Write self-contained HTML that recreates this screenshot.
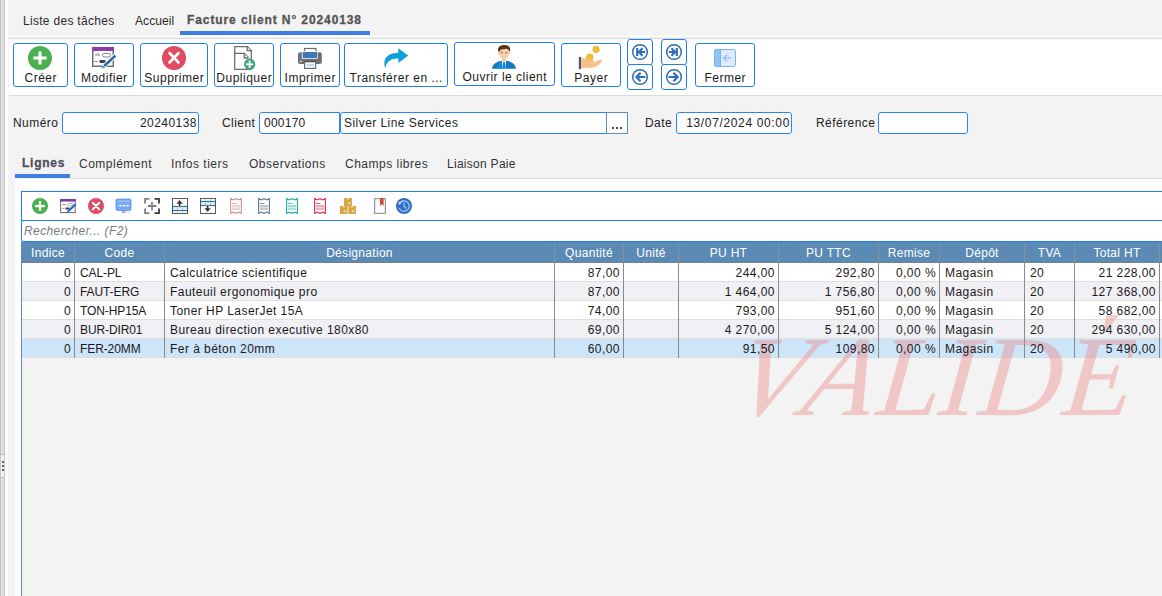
<!DOCTYPE html>
<html><head><meta charset="utf-8">
<style>
*{margin:0;padding:0;box-sizing:border-box}
html,body{width:1162px;height:596px;overflow:hidden;background:#f3f3f3;font-family:"Liberation Sans",sans-serif;font-size:12px;color:#222}
.a{position:absolute}
.t{position:absolute;white-space:nowrap;line-height:14px;font-size:12px;letter-spacing:0.45px}
.btn{position:absolute;top:43px;height:44px;border:1px solid #1f7ff0;border-radius:3px;background:#fff}
.btn .lb{position:absolute;left:0;right:0;top:27px;text-align:center;line-height:14px;white-space:nowrap;color:#1a1a1a;letter-spacing:0.5px;text-indent:0.5px}
.nav{position:absolute;width:26px;height:26px;border:1px solid #1f7ff0;border-radius:3px;background:#fff}
.inp{position:absolute;top:112px;height:22px;border:1px solid #2b87f0;border-radius:3px;background:#fff}
.inp span{position:absolute;top:3px;line-height:14px;white-space:nowrap;letter-spacing:0.45px}
.hd{position:absolute;top:246px;line-height:14px;text-align:center;color:#fff;white-space:nowrap;letter-spacing:0.3px}
.cr{position:absolute;z-index:3;line-height:14px;text-align:right;padding-right:3px;white-space:nowrap;color:#1a1a1a;letter-spacing:0.45px}
.cl{position:absolute;z-index:3;line-height:14px;text-align:left;padding-left:5px;white-space:nowrap;color:#1a1a1a;letter-spacing:0.45px}
.tab{position:absolute;top:157px;line-height:14px;white-space:nowrap;color:#333;letter-spacing:0.5px}
</style></head><body>
<!-- left edge -->
<div class="a" style="left:0;top:0;width:1px;height:596px;background:#c4c4c4"></div>
<div class="a" style="left:1px;top:0;width:3px;height:596px;background:#e0e0e0"></div>
<div class="a" style="left:4px;top:0;width:1px;height:596px;background:#c8c8c8"></div>
<div class="a" style="left:5px;top:0;width:3px;height:596px;background:#fbfbfb"></div>
<div class="a" style="left:1px;top:454px;width:3px;height:24px;background:#f2f2f2;border-top:1px solid #b4b4b4;border-bottom:1px solid #b4b4b4"></div>
<div class="a" style="left:2px;top:461px;width:2px;height:2px;background:#606060"></div>
<div class="a" style="left:2px;top:465px;width:2px;height:2px;background:#606060"></div>
<div class="a" style="left:2px;top:469px;width:2px;height:2px;background:#606060"></div>

<!-- top tabs -->
<div class="t" style="left:23px;top:14px;color:#2a2a2a;letter-spacing:0.3px">Liste des tâches</div>
<div class="t" style="left:135px;top:14px;color:#2a2a2a;letter-spacing:0.1px">Accueil</div>
<div class="t" style="left:187px;top:13px;font-weight:bold;color:#555;letter-spacing:0.9px;-webkit-text-stroke:0.3px #555">Facture client N° 20240138</div>
<div class="a" style="left:180px;top:31px;width:190px;height:4px;background:#3e7fe6"></div>

<!-- toolbar panel -->
<div class="a" style="left:9px;top:35px;width:1153px;height:2px;background:#f9f9f9"></div>
<div class="a" style="left:9px;top:38px;width:1153px;height:1px;background:#d9dbde"></div>
<div class="a" style="left:9px;top:39px;width:1153px;height:56px;background:#fff"></div>
<div class="a" style="left:9px;top:95px;width:1153px;height:1px;background:#d9dbde"></div>

<div class="btn" style="left:13px;width:55px"><div class="lb">Créer</div></div>
<div class="btn" style="left:74px;width:60px"><div class="lb">Modifier</div></div>
<div class="btn" style="left:140px;width:68px"><div class="lb">Supprimer</div></div>
<div class="btn" style="left:214px;width:60px"><div class="lb">Dupliquer</div></div>
<div class="btn" style="left:280px;width:60px"><div class="lb">Imprimer</div></div>
<div class="btn" style="left:344px;width:104px"><div class="lb">Transférer en ...</div></div>
<div class="btn" style="left:454px;top:42px;width:101px"><div class="lb">Ouvrir le client</div></div>
<div class="btn" style="left:561px;width:60px"><div class="lb">Payer</div></div>
<div class="nav" style="left:627px;top:39px"></div>
<div class="nav" style="left:627px;top:64px"></div>
<div class="nav" style="left:661px;top:39px"></div>
<div class="nav" style="left:661px;top:64px"></div>
<div class="btn" style="left:695px;width:60px"><div class="lb">Fermer</div></div>

<!-- form row -->
<div class="t" style="left:13px;top:116px">Numéro</div>
<div class="inp" style="left:62px;width:137px"><span style="right:1px">20240138</span></div>
<div class="t" style="left:222px;top:116px">Client</div>
<div class="inp" style="left:259px;width:81px;border-radius:3px 0 0 3px"><span style="left:4px;letter-spacing:0.25px">000170</span></div>
<div class="inp" style="left:340px;width:267px;border-radius:3px 0 0 3px"><span style="left:3px">Silver Line Services</span></div>
<div class="a" style="left:606px;top:112px;width:22px;height:22px;border:1px solid #5a8dc2;background:#fff"><span class="a" style="left:5px;top:14px;width:2px;height:2px;background:#4a4a4a"></span><span class="a" style="left:9px;top:14px;width:2px;height:2px;background:#4a4a4a"></span><span class="a" style="left:13px;top:14px;width:2px;height:2px;background:#4a4a4a"></span></div>
<div class="t" style="left:645px;top:116px">Date</div>
<div class="inp" style="left:676px;width:116px"><span style="right:1px;letter-spacing:0.65px">13/07/2024 00:00</span></div>
<div class="t" style="left:816px;top:116px">Référence</div>
<div class="inp" style="left:878px;width:90px"></div>

<!-- tabs -->
<div class="tab" style="left:22px;top:156px;font-weight:bold;color:#4f5060;letter-spacing:0.75px;-webkit-text-stroke:0.3px #4f5060">Lignes</div>
<div class="tab" style="left:79px">Complément</div>
<div class="tab" style="left:171px">Infos tiers</div>
<div class="tab" style="left:249px">Observations</div>
<div class="tab" style="left:345px">Champs libres</div>
<div class="tab" style="left:447px;letter-spacing:0.28px">Liaison Paie</div>
<div class="a" style="left:15px;top:174px;width:55px;height:4px;background:#3e7fe6"></div>
<div class="a" style="left:70px;top:178px;width:1092px;height:1px;background:#dcdcdc"></div>
<div class="a" style="left:15px;top:179px;width:1147px;height:417px;background:#fff"></div>

<!-- grid -->
<div id="grid" class="a" style="left:21px;top:241px;width:1141px;height:355px;background:#f3f3f3;border-left:1px solid #5b8cc0"></div>
<div class="a" style="left:21px;top:191px;width:1145px;height:30px;background:#fff;border:1px solid #1f7ff0;border-radius:0"></div>
<div class="a" style="left:21px;top:220px;width:1145px;height:22px;background:#fff;border:1px solid #1f7ff0;border-radius:3px 0 0 3px"></div>
<div class="a" style="left:24px;top:224px;line-height:14px;font-style:italic;color:#7a7a7a;letter-spacing:0.4px">Rechercher... (F2)</div>
<!-- GRID START -->
<div class="a" style="left:22px;top:242px;width:1140px;height:20px;background:#5b8ab5"></div>
<div class="a" style="left:22px;top:262px;width:1140px;height:1px;background:#7a7f86"></div>
<div class="hd" style="left:22px;width:52px">Indice</div>
<div class="hd" style="left:75px;width:89px">Code</div>
<div class="hd" style="left:165px;width:389px">Désignation</div>
<div class="hd" style="left:555px;width:68px">Quantité</div>
<div class="hd" style="left:624px;width:54px">Unité</div>
<div class="hd" style="left:679px;width:99px">PU HT</div>
<div class="hd" style="left:779px;width:99px">PU TTC</div>
<div class="hd" style="left:879px;width:60px">Remise</div>
<div class="hd" style="left:940px;width:84px">Dépôt</div>
<div class="hd" style="left:1025px;width:49px">TVA</div>
<div class="hd" style="left:1075px;width:84px">Total HT</div>
<div class="a" style="left:74px;top:243px;width:1px;height:19px;background:#8a8f96"></div>
<div class="a" style="left:164px;top:243px;width:1px;height:19px;background:#8a8f96"></div>
<div class="a" style="left:554px;top:243px;width:1px;height:19px;background:#8a8f96"></div>
<div class="a" style="left:623px;top:243px;width:1px;height:19px;background:#8a8f96"></div>
<div class="a" style="left:678px;top:243px;width:1px;height:19px;background:#8a8f96"></div>
<div class="a" style="left:778px;top:243px;width:1px;height:19px;background:#8a8f96"></div>
<div class="a" style="left:878px;top:243px;width:1px;height:19px;background:#8a8f96"></div>
<div class="a" style="left:939px;top:243px;width:1px;height:19px;background:#8a8f96"></div>
<div class="a" style="left:1024px;top:243px;width:1px;height:19px;background:#8a8f96"></div>
<div class="a" style="left:1074px;top:243px;width:1px;height:19px;background:#8a8f96"></div>
<div class="a" style="left:1159px;top:243px;width:1px;height:19px;background:#8a8f96"></div>
<div class="a" style="left:22px;top:263px;width:1140px;height:18px;background:#ffffff"></div>
<div class="a" style="left:22px;top:281px;width:1140px;height:1px;background:#dedede"></div>
<div class="a" style="left:74px;top:263px;width:1px;height:19px;background:#8a8a8a"></div>
<div class="a" style="left:164px;top:263px;width:1px;height:19px;background:#8a8a8a"></div>
<div class="a" style="left:554px;top:263px;width:1px;height:19px;background:#8a8a8a"></div>
<div class="a" style="left:623px;top:263px;width:1px;height:19px;background:#8a8a8a"></div>
<div class="a" style="left:678px;top:263px;width:1px;height:19px;background:#8a8a8a"></div>
<div class="a" style="left:778px;top:263px;width:1px;height:19px;background:#8a8a8a"></div>
<div class="a" style="left:878px;top:263px;width:1px;height:19px;background:#8a8a8a"></div>
<div class="a" style="left:939px;top:263px;width:1px;height:19px;background:#8a8a8a"></div>
<div class="a" style="left:1024px;top:263px;width:1px;height:19px;background:#8a8a8a"></div>
<div class="a" style="left:1074px;top:263px;width:1px;height:19px;background:#8a8a8a"></div>
<div class="a" style="left:1159px;top:263px;width:1px;height:19px;background:#8a8a8a"></div>
<div class="cr" style="left:22px;width:52px;top:266px">0</div>
<div class="cl" style="left:75px;width:89px;top:266px;letter-spacing:-0.1px">CAL-PL</div>
<div class="cl" style="left:165px;width:389px;top:266px">Calculatrice scientifique</div>
<div class="cr" style="left:555px;width:68px;top:266px">87,00</div>
<div class="cr" style="left:679px;width:99px;top:266px">244,00</div>
<div class="cr" style="left:779px;width:99px;top:266px">292,80</div>
<div class="cr" style="left:879px;width:60px;top:266px">0,00 %</div>
<div class="cl" style="left:940px;width:84px;top:266px">Magasin</div>
<div class="cl" style="left:1025px;width:49px;top:266px">20</div>
<div class="cr" style="left:1075px;width:84px;top:266px">21 228,00</div>
<div class="a" style="left:22px;top:282px;width:1140px;height:18px;background:#f0f0f5"></div>
<div class="a" style="left:22px;top:300px;width:1140px;height:1px;background:#dedede"></div>
<div class="a" style="left:74px;top:282px;width:1px;height:19px;background:#8a8a8a"></div>
<div class="a" style="left:164px;top:282px;width:1px;height:19px;background:#8a8a8a"></div>
<div class="a" style="left:554px;top:282px;width:1px;height:19px;background:#8a8a8a"></div>
<div class="a" style="left:623px;top:282px;width:1px;height:19px;background:#8a8a8a"></div>
<div class="a" style="left:678px;top:282px;width:1px;height:19px;background:#8a8a8a"></div>
<div class="a" style="left:778px;top:282px;width:1px;height:19px;background:#8a8a8a"></div>
<div class="a" style="left:878px;top:282px;width:1px;height:19px;background:#8a8a8a"></div>
<div class="a" style="left:939px;top:282px;width:1px;height:19px;background:#8a8a8a"></div>
<div class="a" style="left:1024px;top:282px;width:1px;height:19px;background:#8a8a8a"></div>
<div class="a" style="left:1074px;top:282px;width:1px;height:19px;background:#8a8a8a"></div>
<div class="a" style="left:1159px;top:282px;width:1px;height:19px;background:#8a8a8a"></div>
<div class="cr" style="left:22px;width:52px;top:285px">0</div>
<div class="cl" style="left:75px;width:89px;top:285px;letter-spacing:-0.1px">FAUT-ERG</div>
<div class="cl" style="left:165px;width:389px;top:285px">Fauteuil ergonomique pro</div>
<div class="cr" style="left:555px;width:68px;top:285px">87,00</div>
<div class="cr" style="left:679px;width:99px;top:285px">1 464,00</div>
<div class="cr" style="left:779px;width:99px;top:285px">1 756,80</div>
<div class="cr" style="left:879px;width:60px;top:285px">0,00 %</div>
<div class="cl" style="left:940px;width:84px;top:285px">Magasin</div>
<div class="cl" style="left:1025px;width:49px;top:285px">20</div>
<div class="cr" style="left:1075px;width:84px;top:285px">127 368,00</div>
<div class="a" style="left:22px;top:301px;width:1140px;height:18px;background:#ffffff"></div>
<div class="a" style="left:22px;top:319px;width:1140px;height:1px;background:#dedede"></div>
<div class="a" style="left:74px;top:301px;width:1px;height:19px;background:#8a8a8a"></div>
<div class="a" style="left:164px;top:301px;width:1px;height:19px;background:#8a8a8a"></div>
<div class="a" style="left:554px;top:301px;width:1px;height:19px;background:#8a8a8a"></div>
<div class="a" style="left:623px;top:301px;width:1px;height:19px;background:#8a8a8a"></div>
<div class="a" style="left:678px;top:301px;width:1px;height:19px;background:#8a8a8a"></div>
<div class="a" style="left:778px;top:301px;width:1px;height:19px;background:#8a8a8a"></div>
<div class="a" style="left:878px;top:301px;width:1px;height:19px;background:#8a8a8a"></div>
<div class="a" style="left:939px;top:301px;width:1px;height:19px;background:#8a8a8a"></div>
<div class="a" style="left:1024px;top:301px;width:1px;height:19px;background:#8a8a8a"></div>
<div class="a" style="left:1074px;top:301px;width:1px;height:19px;background:#8a8a8a"></div>
<div class="a" style="left:1159px;top:301px;width:1px;height:19px;background:#8a8a8a"></div>
<div class="cr" style="left:22px;width:52px;top:304px">0</div>
<div class="cl" style="left:75px;width:89px;top:304px;letter-spacing:-0.1px">TON-HP15A</div>
<div class="cl" style="left:165px;width:389px;top:304px">Toner HP LaserJet 15A</div>
<div class="cr" style="left:555px;width:68px;top:304px">74,00</div>
<div class="cr" style="left:679px;width:99px;top:304px">793,00</div>
<div class="cr" style="left:779px;width:99px;top:304px">951,60</div>
<div class="cr" style="left:879px;width:60px;top:304px">0,00 %</div>
<div class="cl" style="left:940px;width:84px;top:304px">Magasin</div>
<div class="cl" style="left:1025px;width:49px;top:304px">20</div>
<div class="cr" style="left:1075px;width:84px;top:304px">58 682,00</div>
<div class="a" style="left:22px;top:320px;width:1140px;height:18px;background:#f0f0f5"></div>
<div class="a" style="left:22px;top:338px;width:1140px;height:1px;background:#dedede"></div>
<div class="a" style="left:74px;top:320px;width:1px;height:19px;background:#8a8a8a"></div>
<div class="a" style="left:164px;top:320px;width:1px;height:19px;background:#8a8a8a"></div>
<div class="a" style="left:554px;top:320px;width:1px;height:19px;background:#8a8a8a"></div>
<div class="a" style="left:623px;top:320px;width:1px;height:19px;background:#8a8a8a"></div>
<div class="a" style="left:678px;top:320px;width:1px;height:19px;background:#8a8a8a"></div>
<div class="a" style="left:778px;top:320px;width:1px;height:19px;background:#8a8a8a"></div>
<div class="a" style="left:878px;top:320px;width:1px;height:19px;background:#8a8a8a"></div>
<div class="a" style="left:939px;top:320px;width:1px;height:19px;background:#8a8a8a"></div>
<div class="a" style="left:1024px;top:320px;width:1px;height:19px;background:#8a8a8a"></div>
<div class="a" style="left:1074px;top:320px;width:1px;height:19px;background:#8a8a8a"></div>
<div class="a" style="left:1159px;top:320px;width:1px;height:19px;background:#8a8a8a"></div>
<div class="cr" style="left:22px;width:52px;top:323px">0</div>
<div class="cl" style="left:75px;width:89px;top:323px;letter-spacing:-0.1px">BUR-DIR01</div>
<div class="cl" style="left:165px;width:389px;top:323px">Bureau direction executive 180x80</div>
<div class="cr" style="left:555px;width:68px;top:323px">69,00</div>
<div class="cr" style="left:679px;width:99px;top:323px">4 270,00</div>
<div class="cr" style="left:779px;width:99px;top:323px">5 124,00</div>
<div class="cr" style="left:879px;width:60px;top:323px">0,00 %</div>
<div class="cl" style="left:940px;width:84px;top:323px">Magasin</div>
<div class="cl" style="left:1025px;width:49px;top:323px">20</div>
<div class="cr" style="left:1075px;width:84px;top:323px">294 630,00</div>
<div class="a" style="left:22px;top:339px;width:1140px;height:18px;background:#cde5f9"></div>
<div class="a" style="left:22px;top:357px;width:1140px;height:1px;background:#dedede"></div>
<div class="a" style="left:74px;top:339px;width:1px;height:19px;background:#8a8a8a"></div>
<div class="a" style="left:164px;top:339px;width:1px;height:19px;background:#8a8a8a"></div>
<div class="a" style="left:554px;top:339px;width:1px;height:19px;background:#8a8a8a"></div>
<div class="a" style="left:623px;top:339px;width:1px;height:19px;background:#8a8a8a"></div>
<div class="a" style="left:678px;top:339px;width:1px;height:19px;background:#8a8a8a"></div>
<div class="a" style="left:778px;top:339px;width:1px;height:19px;background:#8a8a8a"></div>
<div class="a" style="left:878px;top:339px;width:1px;height:19px;background:#8a8a8a"></div>
<div class="a" style="left:939px;top:339px;width:1px;height:19px;background:#8a8a8a"></div>
<div class="a" style="left:1024px;top:339px;width:1px;height:19px;background:#8a8a8a"></div>
<div class="a" style="left:1074px;top:339px;width:1px;height:19px;background:#8a8a8a"></div>
<div class="a" style="left:1159px;top:339px;width:1px;height:19px;background:#8a8a8a"></div>
<div class="cr" style="left:22px;width:52px;top:342px">0</div>
<div class="cl" style="left:75px;width:89px;top:342px;letter-spacing:-0.1px">FER-20MM</div>
<div class="cl" style="left:165px;width:389px;top:342px">Fer à béton 20mm</div>
<div class="cr" style="left:555px;width:68px;top:342px">60,00</div>
<div class="cr" style="left:679px;width:99px;top:342px">91,50</div>
<div class="cr" style="left:779px;width:99px;top:342px">109,80</div>
<div class="cr" style="left:879px;width:60px;top:342px">0,00 %</div>
<div class="cl" style="left:940px;width:84px;top:342px">Magasin</div>
<div class="cl" style="left:1025px;width:49px;top:342px">20</div>
<div class="cr" style="left:1075px;width:84px;top:342px">5 490,00</div>
<!-- GRID END -->
<!-- ICONS START -->
<svg class="a" style="left:0;top:0" width="1162" height="596" viewBox="0 0 1162 596">
<!-- Creer -->
<circle cx="40" cy="58" r="12" fill="#4caf50"/>
<rect x="33.5" y="56.5" width="13" height="3" fill="#fff"/>
<rect x="38.5" y="51.5" width="3" height="13" fill="#fff"/>
<!-- Modifier -->
<rect x="92.75" y="47.75" width="20.5" height="18.5" fill="#fff" stroke="#707070" stroke-width="1.5"/>
<rect x="92" y="47" width="22" height="4" fill="#8a3fa8"/>
<rect x="102.5" y="53.5" width="8" height="3.5" rx="1.5" fill="#fff" stroke="#8a8a8a" stroke-width="1"/>
<rect x="95" y="54.5" width="5" height="1" fill="#888"/><rect x="96" y="53.5" width="3" height="1" fill="#aaa"/>
<rect x="99.5" y="60" width="6" height="3" fill="#444"/>
<rect x="94" y="61" width="4" height="1" fill="#999"/>
<path d="M104.2,66 L115.4,55.6" stroke="#fff" stroke-width="4.4" stroke-linecap="round"/>
<path d="M104.2,66 L115.4,55.6" stroke="#1e6ab4" stroke-width="2.6"/>
<path d="M101.6,68.8 L102.6,65.2 L105.2,67.6 Z" fill="#5a8cc8"/>
<!-- Supprimer -->
<circle cx="174" cy="58" r="12" fill="#e04c60"/>
<path d="M169.5,53 L178.5,62.5 M178.5,53 L169.5,62.5" stroke="#fff" stroke-width="2.6" stroke-linecap="round"/>
<!-- Dupliquer -->
<path d="M234.7,46.6 L247.5,46.6 L251.3,50.4 L251.3,69.3 L234.7,69.3 Z" fill="#fff" stroke="#6e6e6e" stroke-width="1.3"/>
<path d="M247.2,46.8 L247.2,50.7 L251.1,50.7" fill="#f0f0f0" stroke="#6e6e6e" stroke-width="1.3"/>
<path d="M234.7,53.4 L244.4,53.4 L248.4,57.5" fill="none" stroke="#6e6e6e" stroke-width="1.3"/>
<path d="M244.3,53.5 L244.3,58 L248.6,58" fill="#f0f0f0" stroke="#6e6e6e" stroke-width="1.3"/>
<circle cx="249.6" cy="64.2" r="5.6" fill="#3fa877"/>
<rect x="246" y="63.4" width="7.2" height="1.8" fill="#fff"/>
<rect x="248.7" y="60.6" width="1.8" height="7.2" fill="#fff"/>
<!-- Imprimer -->
<rect x="304.5" y="48.5" width="11.5" height="5" fill="#fff" stroke="#707070" stroke-width="1.2"/>
<rect x="298" y="52.3" width="23.8" height="11.6" rx="2" fill="#707070"/>
<rect x="301.8" y="51.3" width="16" height="7.6" rx="1.5" fill="#fff"/>
<rect x="302.6" y="52" width="14.6" height="6.2" rx="1" fill="#3a78b8"/>
<rect x="299.8" y="60.8" width="2.2" height="1.2" fill="#ddd"/>
<rect x="304.6" y="61.8" width="11" height="6.6" fill="#fff" stroke="#707070" stroke-width="1.2"/>
<rect x="306.2" y="63.8" width="7.8" height="2.6" fill="#c6d8ec"/>
<rect x="304" y="60.6" width="12" height="1.4" fill="#555"/>
<!-- Transferer -->
<path d="M398.3,48.2 L408.2,55.6 L398.3,63 L398.3,58.4 C391.5,58.2 386.6,61 385.2,68.2 C383,61 385,53.2 398.3,52.8 Z" fill="#0ea0dc"/>
<!-- Ouvrir le client -->
<path d="M492,68.8 C492.5,64.5 495.5,62.5 500,61 L508,61 C512.5,62.5 515.5,64.5 516,68.8 Z" fill="#1978c2"/>
<path d="M500,61 L503,61 L503.7,68.8 L497,68.8 C497.5,65 498.5,62.5 500,61 Z" fill="#0f9ae8" opacity="0.6"/>
<path d="M502,61 L506,61 L505.2,68.8 L502.8,68.8 Z" fill="#fff"/>
<path d="M503.2,62 L504.8,62 L505.2,68.8 L502.8,68.8 Z" fill="#1584d0"/>
<rect x="502" y="57" width="4" height="4.5" fill="#f4c6a4"/>
<ellipse cx="504" cy="53" rx="5" ry="6" fill="#f8d0b0"/>
<rect x="498" y="51.5" width="1.6" height="3" rx="0.8" fill="#f4c6a4"/><rect x="508.4" y="51.5" width="1.6" height="3" rx="0.8" fill="#f4c6a4"/>
<path d="M498.3,51.5 C497.2,47 500,45 504.5,45 C509,45 510.8,47.5 510,51.5 L509,51 C508.5,49 507,48.5 505,49 C502,49.5 500,49 499.5,51.8 Z" fill="#5c3412"/>
<rect x="500.8" y="52.3" width="2" height="1" fill="#7a5a40"/><rect x="505.3" y="52.3" width="2" height="1" fill="#7a5a40"/>
<!-- Payer -->
<circle cx="596" cy="49.4" r="3.2" fill="#f2c12e" stroke="#e6a82a" stroke-width="0.8"/>
<circle cx="589.8" cy="57.2" r="3.2" fill="#f2c12e" stroke="#e6a82a" stroke-width="0.8"/>
<path d="M580.5,58.5 C584,57.5 588,59.5 592,60 C594.5,60.2 595,61.8 593,62 L587,62.2 L594.5,62 C597,61 600,59 602.5,60 C601,62.5 598,66.5 594,67.5 L580.5,68 Z" fill="#f5c08a"/>
<rect x="578.8" y="57" width="2.2" height="12.2" fill="#4a5578"/>
<!-- nav -->
<g fill="none" stroke="#2f6db5" stroke-width="1.5">
<circle cx="640" cy="52" r="7.3"/><circle cx="640" cy="77" r="7.3"/>
<circle cx="674" cy="52" r="7.3"/><circle cx="674" cy="77" r="7.3"/>
</g>
<g fill="none" stroke="#2f6db5" stroke-width="2.2" stroke-linejoin="miter">
<path d="M637.2,48 L637.2,56"/>
<path d="M642.6,48.3 L638.9,52 L642.6,55.7 M639,52 L645.2,52"/>
<path d="M676.8,48 L676.8,56"/>
<path d="M671.4,48.3 L675.1,52 L671.4,55.7 M675,52 L668.8,52"/>
<path d="M640.6,72.8 L636.4,77 L640.6,81.2 M636.6,77 L645.4,77"/>
<path d="M673.4,72.8 L677.6,77 L673.4,81.2 M677.4,77 L668.6,77"/>
</g>
<!-- Fermer -->
<rect x="714.5" y="49.5" width="21" height="17" rx="2" fill="#dcecfc" stroke="#78b2ea" stroke-width="1"/>
<path d="M716.5,49.5 L720.5,49.5 L720.5,66.5 L716.5,66.5 A2,2 0 0 1 714.5,64.5 L714.5,51.5 A2,2 0 0 1 716.5,49.5 Z" fill="#90c4f2" stroke="#78b2ea" stroke-width="1"/>
<path d="M722.5,58 L726.5,54.2 L727.5,55.2 L725.3,57.2 L731,57.2 L731,58.8 L725.3,58.8 L727.5,60.8 L726.5,61.8 Z" fill="#8ec2f0"/>
<!-- grid toolbar -->
<circle cx="40" cy="206" r="8" fill="#4caf50"/>
<rect x="35" y="205" width="10" height="2.2" fill="#fff"/><rect x="38.9" y="201" width="2.2" height="10" fill="#fff"/>
<rect x="60.6" y="199.6" width="14.6" height="13" fill="#fff" stroke="#777" stroke-width="1.1"/>
<rect x="60" y="199" width="15.8" height="2.6" fill="#7f3aa6"/>
<rect x="67.5" y="203.4" width="5.5" height="2.6" rx="1" fill="#fff" stroke="#999" stroke-width="0.8"/>
<rect x="62.5" y="204" width="3.5" height="1" fill="#999"/>
<rect x="65.5" y="207.5" width="4" height="2" fill="#444"/><rect x="62" y="208" width="2.5" height="1" fill="#aaa"/>
<path d="M66.5,213.2 L67.8,210.3 L75,203.6 L76.4,205 L69.2,211.7 Z" fill="#1e6ab4"/>
<circle cx="96" cy="206" r="8" fill="#e04c60"/>
<path d="M92.8,202.8 L99.2,209.2 M99.2,202.8 L92.8,209.2" stroke="#fff" stroke-width="2" stroke-linecap="round"/>
<!-- chat -->
<path d="M117.5,199 L129.5,199 Q131,199 131,200.5 L131,209 Q131,210.5 129.5,210.5 L126,210.5 L122.5,213 L123.2,210.5 L117.5,210.5 Q116,210.5 116,209 L116,200.5 Q116,199 117.5,199 Z" fill="#78a8f0" stroke="#5a8ee0" stroke-width="0.8"/>
<rect x="117.5" y="200.5" width="12" height="1.5" fill="#9cc0f6"/>
<rect x="119.3" y="205" width="2.4" height="1.4" fill="#fff"/><rect x="122.8" y="205" width="2.4" height="1.4" fill="#fff"/><rect x="126.3" y="205" width="2.4" height="1.4" fill="#fff"/>
<rect x="123" y="212.5" width="8" height="0.8" fill="#bbb" opacity="0.6"/>
<!-- bracket plus -->
<g fill="none" stroke-width="1.8">
<path d="M149.5,198.9 L145.1,198.9 L145.1,203.5" stroke="#808080"/>
<path d="M154.5,198.9 L159,198.9 L159,203.5" stroke="#3c3c3c"/>
<path d="M145.1,208.5 L145.1,213.1 L149.5,213.1" stroke="#808080"/>
<path d="M159,208.5 L159,213.1 L154.5,213.1" stroke="#3c3c3c"/>
<path d="M148,206 L156.3,206" stroke="#6a6a6a"/>
<path d="M152,202 L152,210.3" stroke="#888"/>
</g>
<!-- table up -->
<rect x="172.5" y="198.5" width="15" height="15" fill="#fff" stroke="#5a5a5a" stroke-width="1"/>
<rect x="172.5" y="206.4" width="15" height="4.2" fill="#d4eefc" stroke="#2e5c78" stroke-width="1"/>
<path d="M177.5,199.5 L177.5,200.5 M182.5,199.5 L182.5,200.5 M177.5,211 L177.5,213 M182.5,211 L182.5,213 M177.5,207 L177.5,210 M182.5,207 L182.5,210" stroke="#aaa" stroke-width="0.6"/>
<path d="M178.4,207.2 L178.4,203.9 L175.9,203.9 L179.6,199.8 L183.3,203.9 L180.8,203.9 L180.8,207.2 Z" fill="#333" stroke="#fff" stroke-width="0.6"/>
<!-- table down -->
<rect x="200.5" y="198.5" width="15" height="15" fill="#fff" stroke="#5a5a5a" stroke-width="1"/>
<rect x="200.5" y="201.4" width="15" height="4.2" fill="#d4eefc" stroke="#2e5c78" stroke-width="1"/>
<path d="M205.5,199 L205.5,201 M210.5,199 L210.5,201 M205.5,202 L205.5,205 M210.5,202 L210.5,205 M205.5,212 L205.5,213 M210.5,212 L210.5,213" stroke="#aaa" stroke-width="0.6"/>
<path d="M206.4,204.8 L206.4,208.1 L203.9,208.1 L207.6,212.2 L211.3,208.1 L208.8,208.1 L208.8,204.8 Z" fill="#333" stroke="#fff" stroke-width="0.6"/>
<!-- receipts -->
<path d="M230.6,198.6 L233.30,199.9 L236.00,198.6 L238.70,199.9 L241.40,198.6 L241.40,213.4 L238.70,212.1 L236.00,213.4 L233.30,212.1 L230.60,213.4 Z" fill="#fff" stroke="#c99a9a" stroke-width="1.2"/>
<rect x="232" y="203" width="4.5" height="1" fill="#c99a9a" opacity="0.8"/>
<rect x="232" y="205" width="8" height="2.5" fill="#c99a9a" opacity="0.45"/>
<rect x="232" y="208.5" width="8" height="1" fill="#c99a9a" opacity="0.8"/>
<path d="M258.6,198.6 L261.30,199.9 L264.00,198.6 L266.70,199.9 L269.40,198.6 L269.40,213.4 L266.70,212.1 L264.00,213.4 L261.30,212.1 L258.60,213.4 Z" fill="#fff" stroke="#6b7f92" stroke-width="1.2"/>
<rect x="260" y="203" width="4.5" height="1" fill="#6b7f92" opacity="0.8"/>
<rect x="260" y="205" width="8" height="2.5" fill="#6b7f92" opacity="0.45"/>
<rect x="260" y="208.5" width="8" height="1" fill="#6b7f92" opacity="0.8"/>
<path d="M286.6,198.6 L289.30,199.9 L292.00,198.6 L294.70,199.9 L297.40,198.6 L297.40,213.4 L294.70,212.1 L292.00,213.4 L289.30,212.1 L286.60,213.4 Z" fill="#fff" stroke="#2bb0a8" stroke-width="1.2"/>
<rect x="288" y="203" width="4.5" height="1" fill="#2bb0a8" opacity="0.8"/>
<rect x="288" y="205" width="8" height="2.5" fill="#2bb0a8" opacity="0.45"/>
<rect x="288" y="208.5" width="8" height="1" fill="#2bb0a8" opacity="0.8"/>
<path d="M314.6,198.6 L317.30,199.9 L320.00,198.6 L322.70,199.9 L325.40,198.6 L325.40,213.4 L322.70,212.1 L320.00,213.4 L317.30,212.1 L314.60,213.4 Z" fill="#fff" stroke="#e03c58" stroke-width="1.2"/>
<rect x="316" y="203" width="4.5" height="1" fill="#e03c58" opacity="0.8"/>
<rect x="316" y="205" width="8" height="2.5" fill="#e03c58" opacity="0.45"/>
<rect x="316" y="208.5" width="8" height="1" fill="#e03c58" opacity="0.8"/>
<!-- boxes -->
<g fill="#d9a64a">
<rect x="344" y="198" width="8" height="8"/>
<rect x="340" y="206" width="7.6" height="8"/>
<rect x="348.4" y="206" width="7.6" height="8"/>
</g>
<g fill="#fff" opacity="0.75">
<rect x="347.3" y="198" width="1.4" height="1.4"/><rect x="343.3" y="206" width="1.4" height="1.4"/><rect x="351.3" y="206" width="1.4" height="1.4"/>
</g>
<g fill="#f4dca8">
<rect x="348" y="202.5" width="2.6" height="1.6"/><rect x="343.6" y="210.5" width="2.6" height="1.6"/><rect x="351.8" y="210.5" width="2.6" height="1.6"/>
</g>
<rect x="347.6" y="206" width="0.8" height="8" fill="#e8c480"/>
<!-- book -->
<rect x="374.6" y="198.6" width="10.8" height="14.8" fill="#fbfbfb" stroke="#999" stroke-width="1.2"/>
<path d="M380,198.2 L383.6,198.2 L383.6,206 L381.8,204.2 L380,206 Z" fill="#d0443a"/>
<!-- history -->
<circle cx="404" cy="206" r="8" fill="#2f6fca"/>
<path d="M399.6,203.3 A5.2,5.2 0 1 1 399.2,208" fill="none" stroke="#b8d0f0" stroke-width="1.1"/>
<path d="M398.2,201.8 L401.6,202.4 L399.4,205 Z" fill="#dde8f8"/>
<path d="M404,202.8 L404,206.3 L406.3,208.5" fill="none" stroke="#b8d0f0" stroke-width="1.1"/>
</svg>
<!-- ICONS END -->
<!-- WATERMARK -->
<svg class="a" style="left:0;top:0;z-index:2" width="1162" height="596" viewBox="0 0 1162 596"><path d="M1106.4,315 L1119,315 L1104.6,333.2 L1103.2,332.6 Z" fill="rgba(238,125,125,0.39)"/></svg>
<div class="a" style="z-index:2;left:727px;top:317px;transform:skewX(-12deg);transform-origin:0 99px;font-kerning:none;font-family:'Liberation Serif',serif;font-style:italic;font-size:114.5px;line-height:120px;letter-spacing:1.5px;color:rgba(238,125,125,0.39);white-space:nowrap"><span style="display:inline-block;transform:skewX(-4deg);transform-origin:0 99px">V</span><span style="display:inline-block;transform:skewX(-4deg);transform-origin:0 99px">A</span><span style="display:inline-block;transform:skewX(6.5deg);transform-origin:0 99px;margin-left:5px">L</span><span style="display:inline-block;transform:skewX(6.5deg);transform-origin:0 99px;margin-left:-3px">I</span><span style="display:inline-block;transform:skewX(6.5deg);transform-origin:0 99px">D</span><span style="display:inline-block;transform:skewX(6.5deg);transform-origin:0 99px">E</span></div>


</body></html>
